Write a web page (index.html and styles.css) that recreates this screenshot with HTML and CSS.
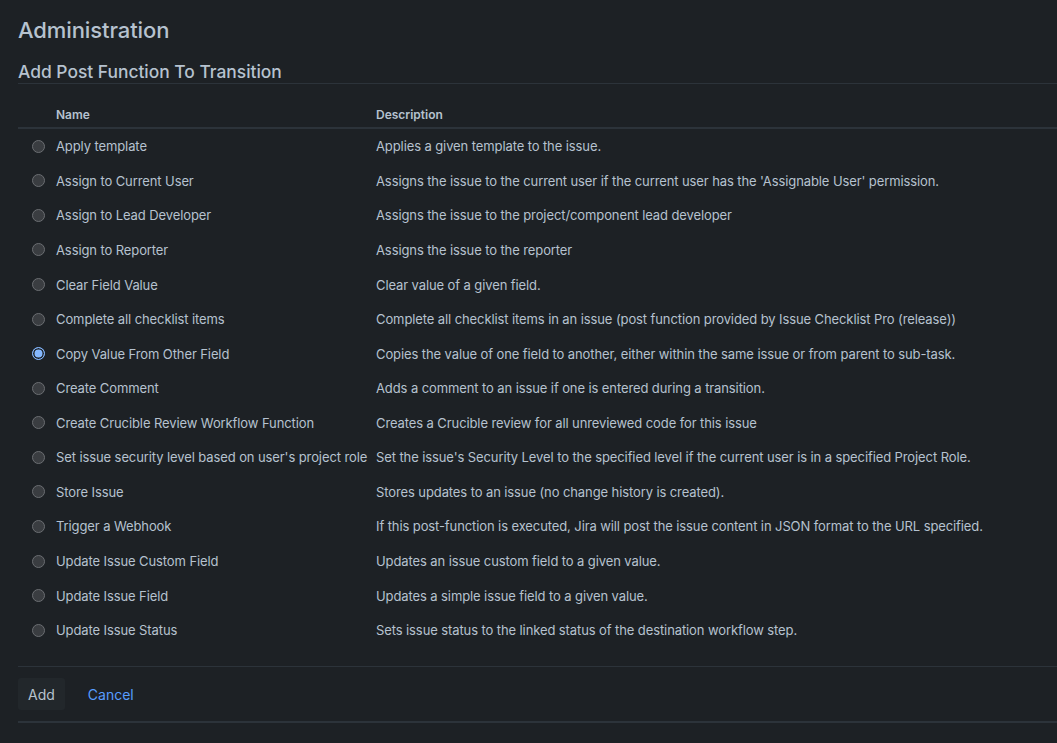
FILE: index.html
```html
<!DOCTYPE html>
<html>
<head>
<meta charset="utf-8">
<link rel="stylesheet" href="styles.css">
</head>
<body>
<div class="page">
  <h1 class="title">Administration</h1>
  <h2 class="subtitle">Add Post Function To Transition</h2>
  <table class="fn-table">
    <colgroup><col class="c-radio"><col class="c-name"><col class="c-desc"></colgroup>
    <thead>
      <tr><th></th><th>Name</th><th>Description</th></tr>
    </thead>
    <tbody>
      <tr><td><span class="radio"></span></td><td>Apply template</td><td>Applies a given template to the issue.</td></tr>
      <tr><td><span class="radio"></span></td><td>Assign to Current User</td><td>Assigns the issue to the current user if the current user has the 'Assignable User' permission.</td></tr>
      <tr><td><span class="radio"></span></td><td>Assign to Lead Developer</td><td>Assigns the issue to the project/component lead developer</td></tr>
      <tr><td><span class="radio"></span></td><td>Assign to Reporter</td><td>Assigns the issue to the reporter</td></tr>
      <tr><td><span class="radio"></span></td><td>Clear Field Value</td><td>Clear value of a given field.</td></tr>
      <tr><td><span class="radio"></span></td><td>Complete all checklist items</td><td>Complete all checklist items in an issue (post function provided by Issue Checklist Pro (release))</td></tr>
      <tr><td><span class="radio checked"></span></td><td>Copy Value From Other Field</td><td>Copies the value of one field to another, either within the same issue or from parent to sub-task.</td></tr>
      <tr><td><span class="radio"></span></td><td>Create Comment</td><td>Adds a comment to an issue if one is entered during a transition.</td></tr>
      <tr><td><span class="radio"></span></td><td>Create Crucible Review Workflow Function</td><td>Creates a Crucible review for all unreviewed code for this issue</td></tr>
      <tr><td><span class="radio"></span></td><td>Set issue security level based on user's project role</td><td>Set the issue's Security Level to the specified level if the current user is in a specified Project Role.</td></tr>
      <tr><td><span class="radio"></span></td><td>Store Issue</td><td>Stores updates to an issue (no change history is created).</td></tr>
      <tr><td><span class="radio"></span></td><td>Trigger a Webhook</td><td>If this post-function is executed, Jira will post the issue content in JSON format to the URL specified.</td></tr>
      <tr><td><span class="radio"></span></td><td>Update Issue Custom Field</td><td>Updates an issue custom field to a given value.</td></tr>
      <tr><td><span class="radio"></span></td><td>Update Issue Field</td><td>Updates a simple issue field to a given value.</td></tr>
      <tr><td><span class="radio"></span></td><td>Update Issue Status</td><td>Sets issue status to the linked status of the destination workflow step.</td></tr>
    </tbody>
  </table>
  <div class="actions">
    <button class="btn-add">Add</button>
    <a class="btn-cancel">Cancel</a>
  </div>
  <div class="bottom-rule"></div>
</div>
</body>
</html>
```
FILE: styles.css
```css
html, body {
  margin: 0;
  padding: 0;
  background: #1d2125;
}
body {
  font-family: Inter, "Noto Sans", "Liberation Sans", sans-serif;
  color: #b6c2cf;
  font-size: 14px;
}
.page {
  padding: 15px 0 0 18px;
  overflow: hidden;
}
.title {
  margin: 0;
  font-size: 22px;
  line-height: 30px;
  font-weight: 500;
  color: #b6c2cf;
  letter-spacing: -0.1px;
}
.subtitle {
  margin: 16px 0 0 0;
  font-size: 17.4px;
  line-height: 22px;
  font-weight: 500;
  color: #b6c2cf;
  padding-bottom: 0;
  border-bottom: 1px solid #2c333a;
}
.fn-table {
  margin-top: 14px;
  width: 1100px;
  border-collapse: collapse;
  table-layout: fixed;
}
.c-radio { width: 38px; }
.c-name { width: 320px; }
.fn-table th {
  text-align: left;
  font-size: 12px;
  font-weight: 600;
  line-height: 16px;
  padding: 9px 0 4px 0;
  color: #b6c2cf;
  border-bottom: 2px solid #2c333a;
}
.fn-table td {
  height: 34.57px;
  padding: 0;
  font-size: 13px;
  line-height: 20px;
  letter-spacing: -0.1px;
  white-space: nowrap;
  vertical-align: middle;
}
.fn-table td:first-child {
  padding-left: 14px;
}
.radio {
  display: block;
  width: 11px;
  height: 11px;
  border-radius: 50%;
  background: #3a3d41;
  border: 1px solid #6b6e72;
}
.radio.checked {
  background: #85b8ff;
  border-color: #85b8ff;
  box-shadow: inset 0 0 0 1.5px #1d2125;
}
.actions {
  margin-top: 19px;
  border-top: 1px solid #2c333a;
  padding: 11px 0 11px 0;
  display: flex;
  align-items: center;
  gap: 23px;
}
.btn-add {
  font-family: inherit;
  font-size: 14px;
  color: #b6c2cf;
  background: #22272b;
  border: none;
  border-radius: 3px;
  height: 32px;
  padding: 0 10px;
}
.btn-cancel {
  color: #579dff;
  font-size: 14px;
}
.bottom-rule {
  border-top: 2px solid #2c333a;
}
```
